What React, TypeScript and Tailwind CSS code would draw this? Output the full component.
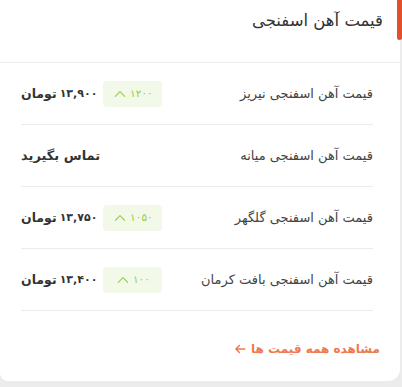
const rows = [
  { name: "قیمت آهن اسفنجی نیریز", change: "۱۲۰۰", amount: "۱۳,۹۰۰" },
  { name: "قیمت آهن اسفنجی میانه", change: null, amount: null },
  { name: "قیمت آهن اسفنجی گلگهر", change: "۱۰۵۰", amount: "۱۳,۷۵۰" },
  { name: "قیمت آهن اسفنجی بافت کرمان", change: "۱۰۰", amount: "۱۳,۴۰۰" },
];

const ChevronUp = () => (
  <svg width="14" height="14" viewBox="0 0 24 24" fill="none" stroke="currentColor" strokeWidth="1.8" strokeLinecap="round" strokeLinejoin="round">
    <path d="M4 16l8-8 8 8" />
  </svg>
);

const App = () => {
  return (
    <div className="min-h-[387px] bg-[#ececec] font-['DejaVu_Sans',sans-serif]" dir="rtl">
      <div className="w-[400px] ml-auto mr-[2px] bg-white rounded-bl-lg rounded-br-xl h-[381px] flex flex-col">
        <div className="flex items-start h-[63px] border-b border-[#ececec]">
          <div className="w-[5px] h-10 bg-[#e1502a] rounded-b-sm -mr-[2px]" />
          <h2 className="pr-[14px] pt-[11px] text-[16.5px] text-[#333] leading-5">قیمت آهن اسفنجی</h2>
        </div>
        <div className="pr-[27px] pl-[21px]">
          {rows.map((r) => (
            <div key={r.name} className="h-[62px] pt-[1px] flex items-center justify-between border-b border-[#ebebeb]">
              <span className="text-[13px] text-[#444]">{r.name}</span>
              <div className="flex items-center gap-[6px]">
                {r.change && (
                  <span className="h-[26px] w-[59px] flex items-center justify-center gap-[3px] rounded bg-[#f3f9e9] text-[#94cc4c] text-[10.5px]">
                    <span>{r.change}</span>
                    <ChevronUp />
                  </span>
                )}
                {r.amount ? (
                  <span className="flex items-center gap-[3px] text-[12.5px] font-bold text-[#333]">
                    <span className="text-[11px] tracking-[-0.9px]">{r.amount}</span>
                    <span>تومان</span>
                  </span>
                ) : (
                  <span className="text-[13px] font-bold text-[#333]">تماس بگیرید</span>
                )}
              </div>
            </div>
          ))}
        </div>
        <div className="pr-[20px] pt-[25px]">
          <a className="inline-flex items-center gap-[4px] text-[12px] font-bold text-[#ef7a50]">
            مشاهده همه قیمت ها
            <svg width="14" height="14" viewBox="0 0 24 24" fill="none" stroke="currentColor" strokeWidth="2.6" strokeLinecap="round" strokeLinejoin="round">
              <path d="M20 12H5M11 6l-6 6 6 6" />
            </svg>
          </a>
        </div>
      </div>
    </div>
  );
};

export default App;
